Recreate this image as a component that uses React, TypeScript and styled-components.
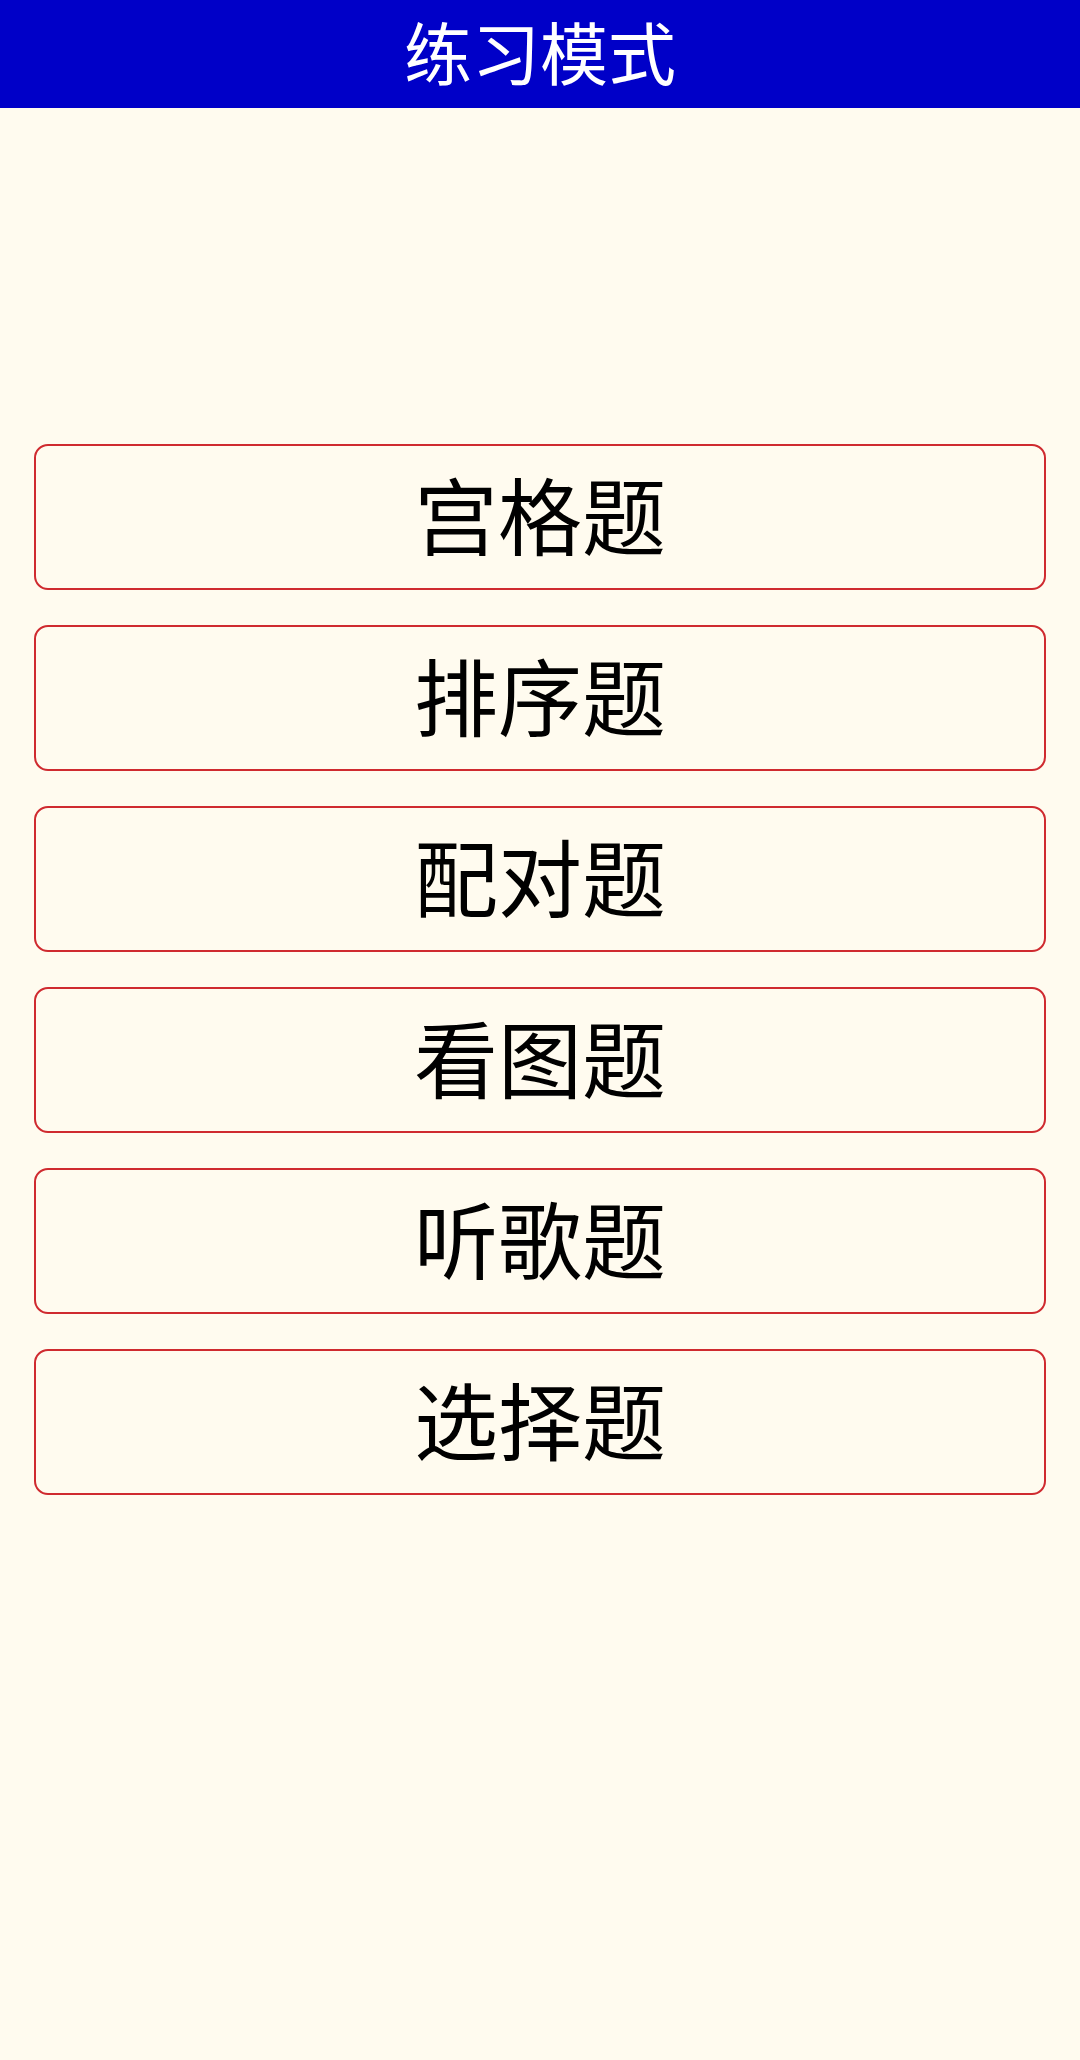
import React from "react";
import styled, { createGlobalStyle } from "styled-components";

const Global = createGlobalStyle`
  html, body {
    margin: 0;
    padding: 0;
    background: #fffbef;
  }
  body {
    font-family: "Noto Sans CJK SC", "Noto Sans", sans-serif;
  }
`;

const Page = styled.div`
  width: 1080px;
  min-height: 2060px;
  background: #fffbef;
  display: flex;
  flex-direction: column;
`;

const Header = styled.header`
  height: 108px;
  background: #0000c8;
  display: flex;
  align-items: center;
  justify-content: center;
  padding-bottom: 6px;
  box-sizing: border-box;
`;

const Title = styled.h1`
  margin: 0;
  color: #ffffff;
  font-size: 68px;
  font-weight: 400;
  line-height: 1;
`;

const List = styled.div`
  display: flex;
  flex-direction: column;
  gap: 35px;
  padding: 336px 34px 0;
`;

const ModeButton = styled.button`
  height: 146px;
  box-sizing: border-box;
  border: 2px solid #cf2a2f;
  border-radius: 14px;
  background: transparent;
  display: flex;
  align-items: center;
  justify-content: center;
  font-family: "Noto Sans CJK SC", "Noto Sans", sans-serif;
  font-size: 84px;
  font-weight: 400;
  line-height: 1;
  color: #000;
  padding: 0 0 8px;
  cursor: pointer;
`;

const modes = ["宫格题", "排序题", "配对题", "看图题", "听歌题", "选择题"];

export default function App() {
  return (
    <>
      <Global />
      <Page>
        <Header>
          <Title>练习模式</Title>
        </Header>
        <List>
          {modes.map((m) => (
            <ModeButton key={m}>{m}</ModeButton>
          ))}
        </List>
      </Page>
    </>
  );
}
